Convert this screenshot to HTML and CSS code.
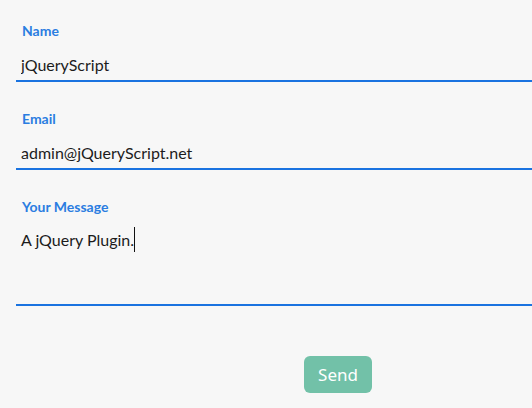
FILE: index.html
```html
<!DOCTYPE html>
<html lang="en">
<head>
<meta charset="utf-8">
<title>Contact form</title>
<link rel="stylesheet" href="styles.css">
</head>
<body>
<form class="form">
  <div class="field">
    <label class="label" for="name">Name</label>
    <input class="input" id="name" type="text" value="jQueryScript">
  </div>
  <div class="field">
    <label class="label" for="email">Email</label>
    <input class="input" id="email" type="text" value="admin@jQueryScript.net">
  </div>
  <div class="field">
    <label class="label">Your Message</label>
    <div class="textarea" role="textbox" aria-multiline="true">A jQuery Plugin.<span class="caret"></span></div>
  </div>
  <div class="actions">
    <button class="send" type="button">Send</button>
  </div>
</form>
</body>
</html>
```
FILE: styles.css
```css
html, body {
  margin: 0;
  padding: 0;
  background: #f7f7f7;
  overflow: hidden;
}
body {
  width: 532px;
  height: 408px;
}
.form {
  padding: 22px 0 0 16px;
  display: flex;
  flex-direction: column;
}
.field {
  display: flex;
  flex-direction: column;
  margin-bottom: 28px;
}
.label {
  display: block;
  height: 17px;
  line-height: 18px;
  padding-left: 6px;
  font-family: Lato, sans-serif;
  font-weight: 700;
  font-size: 14px;
  color: #2b7de1;
}
.input,
.textarea {
  box-sizing: border-box;
  display: block;
  width: 100%;
  margin: 0;
  padding: 0 0 0 5px;
  border: 0;
  border-bottom: 2px solid #1a73e0;
  background: transparent;
  font-family: Lato, sans-serif;
  font-size: 16px;
  color: #1c1c1c;
  outline: none;
}
.input {
  height: 43px;
  line-height: 30px;
  padding-top: 9px;
}
.textarea {
  height: 91px;
  padding-top: 12px;
  line-height: 24px;
}
.caret {
  display: inline-block;
  width: 1px;
  height: 25px;
  background: #111;
  vertical-align: -6px;
}
.actions {
  padding-left: 288px;
  margin-top: 22px;
}
.send {
  width: 68px;
  height: 37px;
  border: 0;
  border-radius: 6px;
  background: #72c1a8;
  color: #ffffff;
  font-family: "Noto Sans", sans-serif;
  font-size: 17px;
  padding: 0;
  cursor: pointer;
}
```
